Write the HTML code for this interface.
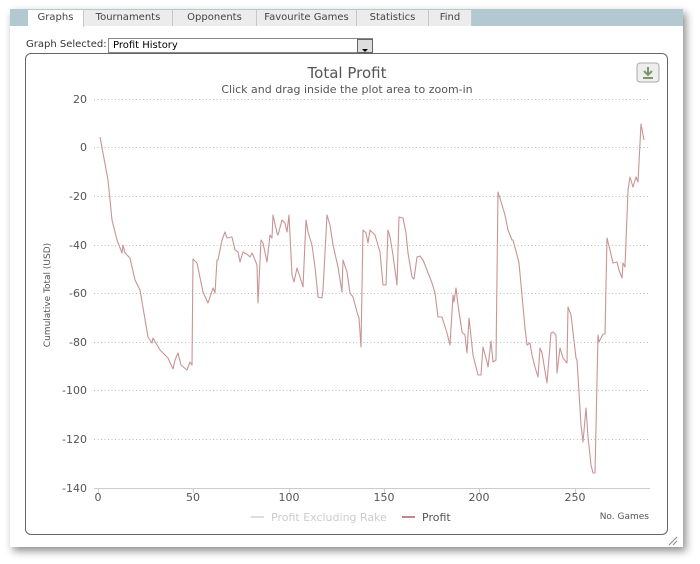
<!DOCTYPE html>
<html><head><meta charset="utf-8"><style>
body{margin:0;width:700px;height:564px;background:#fff;position:relative;overflow:hidden;font-family:"DejaVu Sans","Liberation Sans",sans-serif}
.win{position:absolute;left:10px;top:9px;width:673px;height:538px;background:#fff;box-shadow:3px 4px 8px rgba(0,0,0,.45)}
.tabs{position:absolute;left:0;top:0;width:673px;height:17px;background:#b3c9d2}
.tab{position:absolute;top:1px;height:16px;background:#ececec;border-right:1px solid #c8c8c8;font-size:10px;color:#444;line-height:15px;text-align:center}
.tab.a{background:#fff;height:17px}
.sel{position:absolute;left:16px;top:29px;font-size:10px;color:#333}
.box{position:absolute;left:97px;top:37px;border:1px solid #888;background:#fff;font-size:10px;line-height:13px;padding-left:4px;box-sizing:border-box;width:265px;height:15px}
.dd{position:absolute;left:357px;top:38px;width:14px;height:12px;border:1px solid #666;background:#ddd}
.chart{position:absolute;left:25px;top:53px;width:643px;height:482px;border:1px solid #666;border-radius:6px;box-sizing:border-box}
</style></head><body>
<div class="win">
<div class="tabs">
<div class="tab a" style="left:18px;width:55px">Graphs</div>
<div class="tab" style="left:74px;width:88px">Tournaments</div>
<div class="tab" style="left:163px;width:83px">Opponents</div>
<div class="tab" style="left:247px;width:99px">Favourite Games</div>
<div class="tab" style="left:347px;width:71px">Statistics</div>
<div class="tab" style="left:419px;width:42px">Find</div>
</div>
</div>
<div class="sel" style="top:39px;left:26px">Graph Selected:</div>
<div class="box" style="left:108px;top:38px">Profit History</div>
<div class="dd" style="left:357px;top:39px"><svg width="14" height="12"><path d="M4 6h6l-3 3z" fill="#000"/></svg></div>
<div class="chart"></div>
<svg width="700" height="564" style="position:absolute;left:0;top:0" font-family="DejaVu Sans, Liberation Sans, sans-serif">
<rect x="637" y="63" width="22" height="19" rx="3" fill="#eee" stroke="#aaa"/>
<path d="M648 67v8M644 71l4 4 4-4M643 78h10" stroke="#7a9a6a" stroke-width="2" fill="none"/>
<text x="347" y="78" font-size="15" fill="#555" text-anchor="middle">Total Profit</text>
<text x="347" y="93" font-size="11" fill="#555" text-anchor="middle">Click and drag inside the plot area to zoom-in</text>
<g stroke="#bbb" stroke-dasharray="1,2.5" stroke-width="1">
<line x1="94" x2="650" y1="99.5" y2="99.5"/><line x1="94" x2="650" y1="147.5" y2="147.5"/><line x1="94" x2="650" y1="196.5" y2="196.5"/><line x1="94" x2="650" y1="245.5" y2="245.5"/><line x1="94" x2="650" y1="293.5" y2="293.5"/><line x1="94" x2="650" y1="342.5" y2="342.5"/><line x1="94" x2="650" y1="390.5" y2="390.5"/><line x1="94" x2="650" y1="439.5" y2="439.5"/>
</g>
<line x1="94" x2="650" y1="488.5" y2="488.5" stroke="#ccc"/>
<g stroke="#ccc"><line x1="98.5" x2="98.5" y1="488" y2="493"/><line x1="193.5" x2="193.5" y1="488" y2="493"/><line x1="289.5" x2="289.5" y1="488" y2="493"/><line x1="384.5" x2="384.5" y1="488" y2="493"/><line x1="479.5" x2="479.5" y1="488" y2="493"/><line x1="575.5" x2="575.5" y1="488" y2="493"/></g>
<g font-size="11" fill="#555" text-anchor="end">
<text x="87" y="103">20</text><text x="87" y="151">0</text><text x="87" y="200">-20</text><text x="87" y="249">-40</text><text x="87" y="297">-60</text><text x="87" y="346">-80</text><text x="87" y="394">-100</text><text x="87" y="443">-120</text><text x="87" y="492">-140</text>
</g>
<g font-size="11" fill="#555" text-anchor="middle">
<text x="98" y="501">0</text><text x="193" y="501">50</text><text x="289" y="501">100</text><text x="384" y="501">150</text><text x="479" y="501">200</text><text x="575" y="501">250</text>
</g>
<text transform="translate(50,295) rotate(-90)" font-size="9" fill="#555" text-anchor="middle">Cumulative Total (USD)</text>
<text x="649" y="519" font-size="9" fill="#555" text-anchor="end">No. Games</text>
<line x1="251" x2="264" y1="517" y2="517" stroke="#ddd" stroke-width="2"/>
<text x="271" y="521" font-size="11" fill="#ccc">Profit Excluding Rake</text>
<line x1="402" x2="415" y1="517" y2="517" stroke="#c08888" stroke-width="2"/>
<text x="422" y="521" font-size="11" fill="#555">Profit</text>
<polyline fill="none" stroke="#c99494" stroke-width="1.1" stroke-linejoin="round" points="100,137 108,180 112,220 117,240 122,253 123,245 125,253 130,258 135,280 140,290 148,337 152,343 153,338 160,350 168,358 173,369 175,360 178,353 181,365 187,370 190,362 192,365 193,259 197,263 203,292 208,303 213,288 215,293 217,260 218,260 222,240 225,232 227,238 232,237 235,250 238,252 240,262 243,252 248,255 250,257 252,253 253,255 257,265 258,303 261,240 263,243 267,262 270,235 272,238 273,215 277,233 278,235 282,220 285,223 287,232 289,215 292,275 294,282 297,268 300,277 303,287 306,220 308,232 312,245 315,267 318,297 322,298 323,290 327,215 330,225 333,245 338,267 342,292 343,260 347,272 350,293 353,297 357,312 359,318 361,347 363,230 366,233 368,243 370,230 375,235 380,252 383,285 386,285 388,230 390,237 393,255 397,285 399,217 403,218 406,233 408,253 412,277 414,279 417,257 420,256 423,260 427,270 432,283 435,293 438,317 442,317 447,333 450,345 453,295 454,302 456,288 458,305 462,332 465,335 467,353 469,318 473,355 478,375 481,375 483,347 487,362 488,367 491,341 493,362 496,360 498,192 502,205 505,215 508,230 512,240 513,240 517,255 519,263 525,328 527,345 530,343 532,355 535,367 538,377 540,348 542,353 547,383 551,333 553,332 556,335 557,373 560,348 563,358 567,363 568,307 571,315 576,358 577,360 581,425 583,442 586,408 588,437 591,465 593,473 595,473 598,335 599,342 603,334 605,334 607,238 610,250 613,263 617,262 619,270 622,278 623,263 625,267 628,190 630,177 633,187 636,177 638,182 641,124 644,140"/>
<path d="M669 545l8-8M673 545l4-4" stroke="#888"/>
</svg>
</body></html>
